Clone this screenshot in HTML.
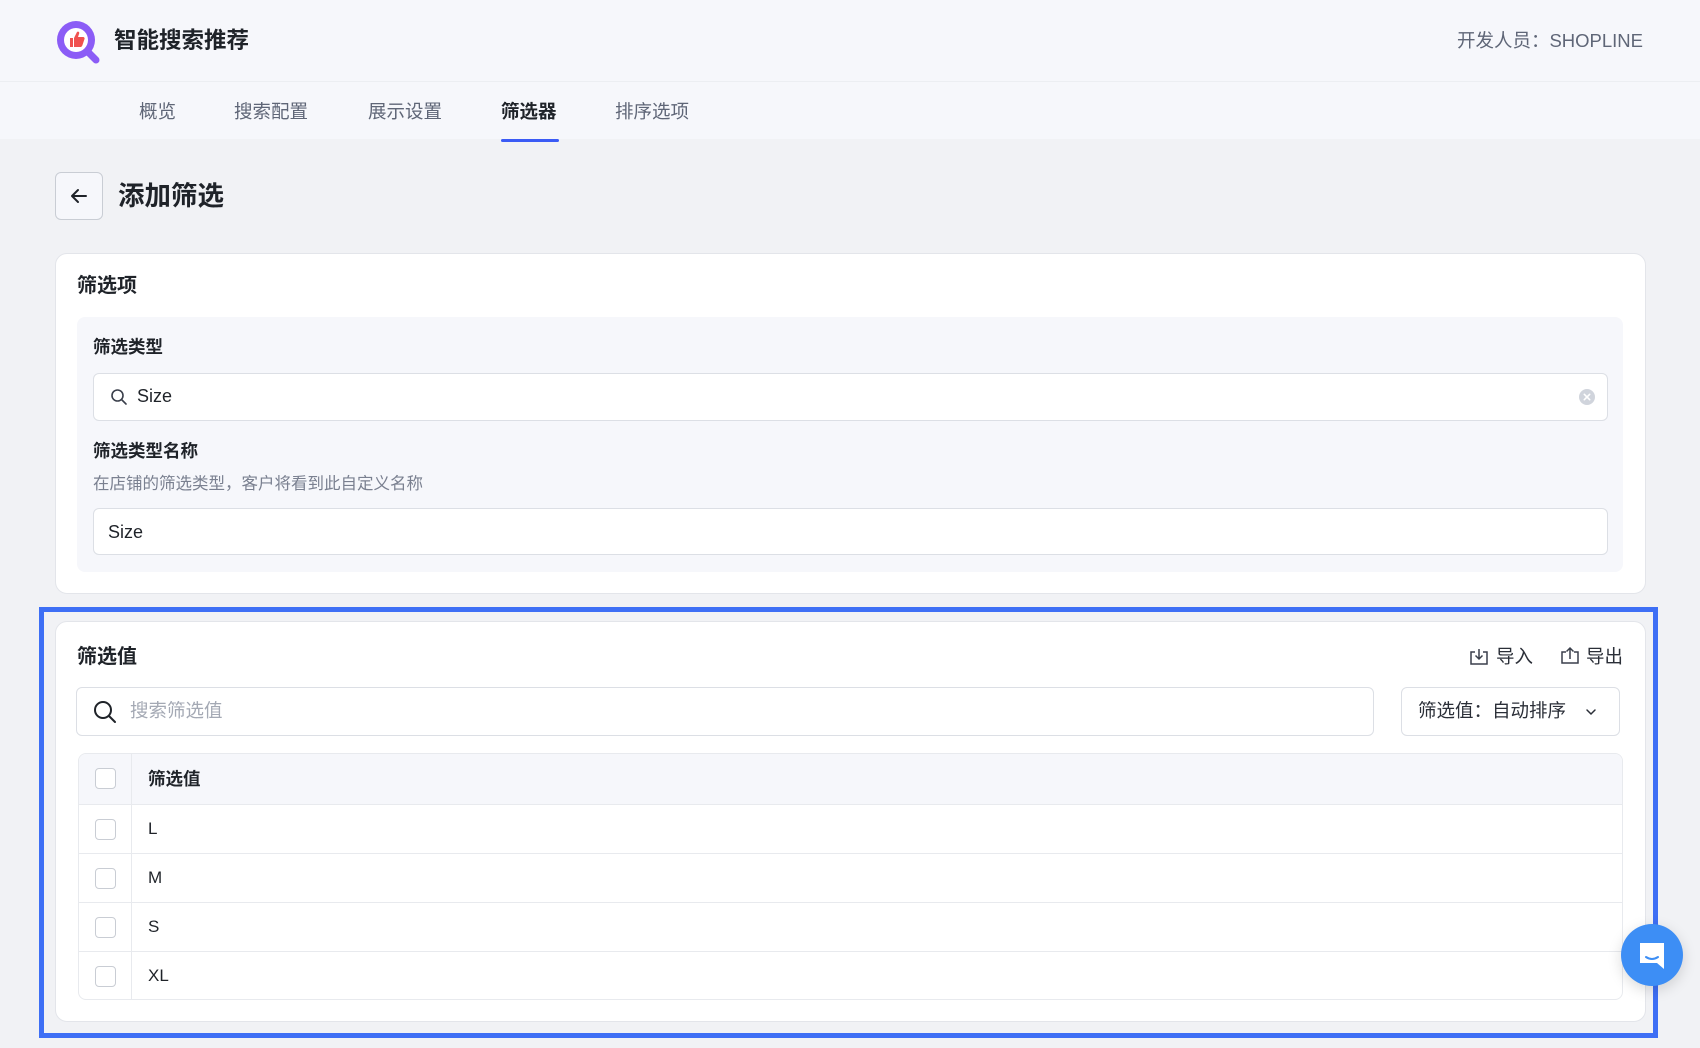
<!DOCTYPE html>
<html><head><meta charset="utf-8">
<style>
*{box-sizing:border-box;margin:0;padding:0}
body{width:1700px;height:1048px;overflow:hidden;background:#f1f2f5;font-family:"Liberation Sans","Noto Sans CJK SC",sans-serif;color:#1f2329;position:relative}
.abs{position:absolute}
.hdr{left:0;top:0;width:1700px;height:82px;background:#f6f7fb;border-bottom:1px solid #eceef2}
.nav{left:0;top:82px;width:1700px;height:57px;background:#f6f7fb}
.tab{top:98px;font-size:18.5px;color:#5f6677;line-height:28px}
.card{background:#fff;border:1px solid #e3e5ea;border-radius:12px}
.input{background:#fff;border:1px solid #dcdfe5;border-radius:6px}
.lbl{font-size:17.5px;font-weight:bold;color:#1f2329}
.cb{position:absolute;left:16px;top:14px;width:21px;height:21px;border:1.5px solid #c9cdd4;border-radius:4px;background:#fff}
.rt{position:absolute;left:69px;top:0;line-height:48px;font-size:17px}
.vd{position:absolute;left:52px;top:0;bottom:0;width:1px;background:#e8eaee}
</style></head><body>
<div class="abs hdr"></div>
<svg class="abs" style="left:54px;top:18px" width="48" height="48" viewBox="0 0 48 48">
<circle cx="22" cy="22" r="19" fill="#8b5cf6"/>
<path d="M34 34 L42 42" stroke="#8b5cf6" stroke-width="7" stroke-linecap="round"/>
<circle cx="22" cy="22" r="12" fill="#fff"/>
<path d="M16 20h3v9h-3z M20 20 l3-6 c1-1 3 0 2 2 l-1 3 h5 c1 0 2 1 1.5 2 l-2 6 c-.3 1-1 2-2 2 H20z" fill="#f0524f"/>
</svg>
<div class="abs" style="left:114px;top:27px;font-size:22.5px;font-weight:bold;line-height:28px">智能搜索推荐</div>
<div class="abs" style="right:57px;top:28px;font-size:18.5px;color:#5f6677;line-height:26px">开发人员：SHOPLINE</div>
<div class="abs nav"></div>
<div class="abs tab" style="left:139px">概览</div>
<div class="abs tab" style="left:234px">搜索配置</div>
<div class="abs tab" style="left:368px">展示设置</div>
<div class="abs tab" style="left:501px;color:#1f2329;font-weight:bold">筛选器</div>
<div class="abs" style="left:501px;top:139px;width:58px;height:3px;background:#3b5bf5;border-radius:2px"></div>
<div class="abs tab" style="left:615px">排序选项</div>

<div class="abs" style="left:55px;top:172px;width:48px;height:48px;border:1px solid #c9cdd4;border-radius:6px;background:#f6f7fb"></div>
<svg class="abs" style="left:67px;top:184px" width="24" height="24" viewBox="0 0 24 24"><path d="M19 12H5 M11 6 L5 12 L11 18" stroke="#1f2329" stroke-width="2" fill="none" stroke-linecap="round" stroke-linejoin="round"/></svg>
<div class="abs" style="left:118px;top:180px;font-size:26.5px;font-weight:bold;line-height:32px">添加筛选</div>

<div class="abs card" style="left:55px;top:253px;width:1591px;height:341px"></div>
<div class="abs lbl" style="left:77px;top:274px;font-size:20px;line-height:24px">筛选项</div>
<div class="abs" style="left:77px;top:317px;width:1546px;height:255px;background:#f6f7fb;border-radius:8px"></div>
<div class="abs lbl" style="left:93px;top:336px;line-height:22px">筛选类型</div>
<div class="abs input" style="left:93px;top:373px;width:1515px;height:48px"></div>
<svg class="abs" style="left:109px;top:387px" width="20" height="20" viewBox="0 0 20 20"><circle cx="8.5" cy="8.5" r="5.5" stroke="#3a3f4b" stroke-width="1.6" fill="none"/><path d="M12.5 12.5 L17 17" stroke="#3a3f4b" stroke-width="1.6" stroke-linecap="round"/></svg>
<div class="abs" style="left:137px;top:383px;font-size:18px;line-height:26px;color:#1f2329">Size</div>
<svg class="abs" style="left:1578px;top:388px" width="18" height="18" viewBox="0 0 18 18"><circle cx="9" cy="9" r="8" fill="#d0d4dc"/><path d="M6.3 6.3 L11.7 11.7 M11.7 6.3 L6.3 11.7" stroke="#fff" stroke-width="1.6" stroke-linecap="round"/></svg>
<div class="abs lbl" style="left:93px;top:440px;line-height:22px">筛选类型名称</div>
<div class="abs" style="left:93px;top:473px;font-size:16.5px;color:#7a8090;line-height:22px">在店铺的筛选类型，客户将看到此自定义名称</div>
<div class="abs input" style="left:93px;top:508px;width:1515px;height:47px"></div>
<div class="abs" style="left:108px;top:519px;font-size:18px;line-height:26px">Size</div>

<div class="abs" style="left:39px;top:607px;width:1619px;height:431px;border:5px solid #3e6ff5"></div>
<div class="abs card" style="left:55px;top:621px;width:1591px;height:401px"></div>
<div class="abs lbl" style="left:77px;top:645px;font-size:20px;line-height:24px">筛选值</div>
<svg class="abs" style="left:1469px;top:647px" width="20" height="20" viewBox="0 0 20 20" fill="none" stroke="#3a3f4b" stroke-width="1.5"><path d="M6 5 H2 V17 H18 V5 H14"/><path d="M10 2 V12 M6.5 8.5 L10 12 L13.5 8.5"/></svg>
<div class="abs" style="left:1496px;top:645px;font-size:18.5px;line-height:24px;color:#2b2f38">导入</div>
<svg class="abs" style="left:1560px;top:645px" width="20" height="20" viewBox="0 0 20 20" fill="none" stroke="#3a3f4b" stroke-width="1.5"><path d="M6 7 H2 V18 H18 V7 H14"/><path d="M10 14 V3 M6.5 6.5 L10 3 L13.5 6.5"/></svg>
<div class="abs" style="left:1586px;top:645px;font-size:18.5px;line-height:24px;color:#2b2f38">导出</div>

<div class="abs input" style="left:76px;top:687px;width:1298px;height:49px"></div>
<svg class="abs" style="left:92px;top:699px" width="26" height="26" viewBox="0 0 26 26"><circle cx="11" cy="11" r="8" stroke="#1f2329" stroke-width="2" fill="none"/><path d="M17 17 L23 23" stroke="#1f2329" stroke-width="2" stroke-linecap="round"/></svg>
<div class="abs" style="left:130px;top:698px;font-size:18.5px;line-height:26px;color:#a4a9b4">搜索筛选值</div>
<div class="abs input" style="left:1401px;top:687px;width:219px;height:49px"></div>
<div class="abs" style="left:1418px;top:698px;font-size:18.5px;line-height:26px;color:#2b2f38">筛选值：自动排序</div>
<svg class="abs" style="left:1583px;top:704px" width="16" height="16" viewBox="0 0 16 16"><path d="M4 6 L8 10 L12 6" stroke="#2b2f38" stroke-width="1.5" fill="none" stroke-linecap="round"/></svg>

<div class="abs" style="left:78px;top:753px;width:1545px;height:247px;border:1px solid #e8eaee;border-radius:8px;overflow:hidden;background:#fff">
 <div style="position:absolute;left:0;top:0;width:100%;height:50px;background:#f6f7fb"><div class="cb"></div><div class="vd"></div><div class="rt" style="font-weight:bold;line-height:50px;font-size:17.5px">筛选值</div></div>
 <div style="position:absolute;left:0;top:50px;width:100%;height:49px;border-top:1px solid #e8eaee"><div class="cb"></div><div class="vd"></div><div class="rt">L</div></div>
 <div style="position:absolute;left:0;top:99px;width:100%;height:49px;border-top:1px solid #e8eaee"><div class="cb"></div><div class="vd"></div><div class="rt">M</div></div>
 <div style="position:absolute;left:0;top:148px;width:100%;height:49px;border-top:1px solid #e8eaee"><div class="cb"></div><div class="vd"></div><div class="rt">S</div></div>
 <div style="position:absolute;left:0;top:197px;width:100%;height:50px;border-top:1px solid #e8eaee"><div class="cb"></div><div class="vd"></div><div class="rt">XL</div></div>
</div>

<div class="abs" style="left:1621px;top:924px;width:62px;height:62px;border-radius:50%;background:#3d8ef5;box-shadow:0 4px 14px rgba(0,0,0,.15)"></div>
<svg class="abs" style="left:1637px;top:940px" width="30" height="30" viewBox="0 0 30 30"><path d="M3 3 H27 V29 L20 23 H3 Z" fill="#fff"/><path d="M9 17 Q15 21 21 17" stroke="#3d8ef5" stroke-width="2" fill="none" stroke-linecap="round"/></svg>
</body></html>
